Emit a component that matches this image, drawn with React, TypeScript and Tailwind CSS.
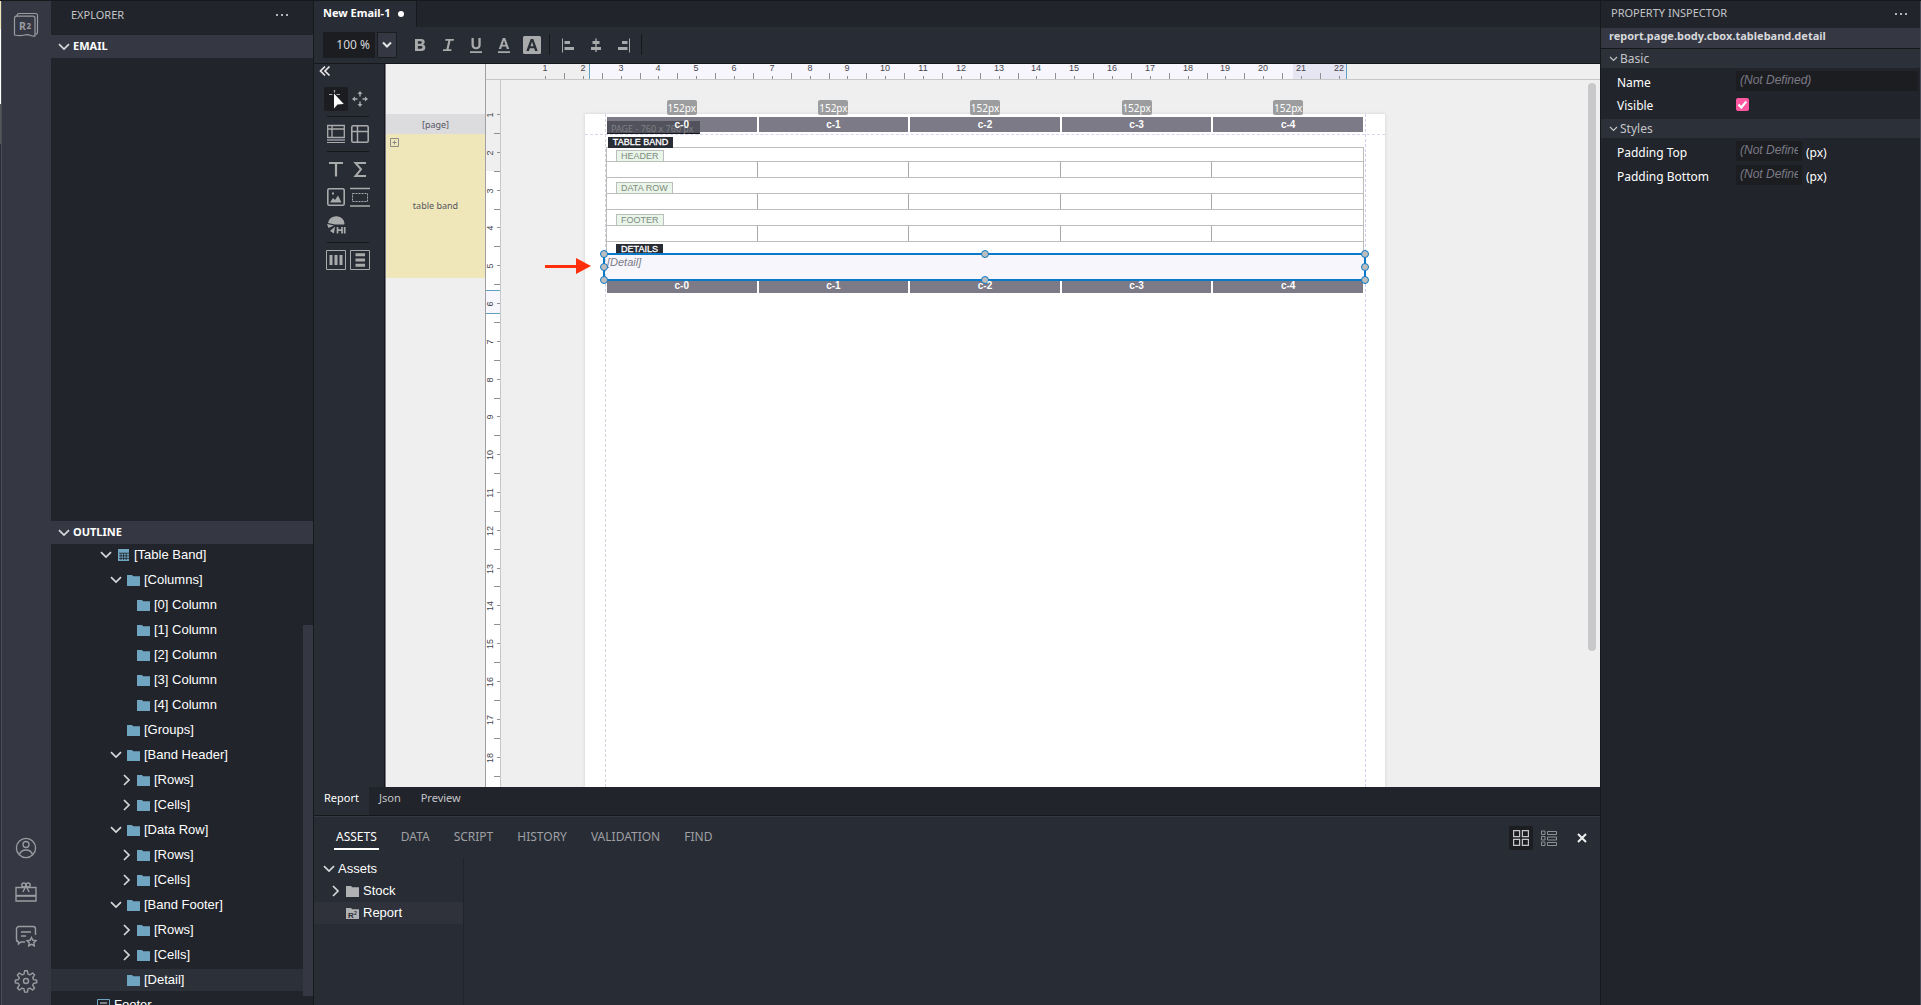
import React from "react";
import clsx from "clsx";

const UNIT = 37.8;

const outlineRows = [
  { level: 1, label: "[Table Band]", icon: "table", state: "open" },
  { level: 2, label: "[Columns]", icon: "folder", state: "open" },
  { level: 3, label: "[0] Column", icon: "folder" },
  { level: 3, label: "[1] Column", icon: "folder" },
  { level: 3, label: "[2] Column", icon: "folder" },
  { level: 3, label: "[3] Column", icon: "folder" },
  { level: 3, label: "[4] Column", icon: "folder" },
  { level: 2, label: "[Groups]", icon: "folder" },
  { level: 2, label: "[Band Header]", icon: "folder", state: "open" },
  { level: 3, label: "[Rows]", icon: "folder", state: "closed" },
  { level: 3, label: "[Cells]", icon: "folder", state: "closed" },
  { level: 2, label: "[Data Row]", icon: "folder", state: "open" },
  { level: 3, label: "[Rows]", icon: "folder", state: "closed" },
  { level: 3, label: "[Cells]", icon: "folder", state: "closed" },
  { level: 2, label: "[Band Footer]", icon: "folder", state: "open" },
  { level: 3, label: "[Rows]", icon: "folder", state: "closed" },
  { level: 3, label: "[Cells]", icon: "folder", state: "closed" },
  { level: 2, label: "[Detail]", icon: "folder", selected: true },
  { level: 0, label: "Footer", icon: "section" },
];

const indents = ["pl-[39px]", "pl-[48px]", "pl-[58px]", "pl-[68px]"];

const columns = ["c-0", "c-1", "c-2", "c-3", "c-4"];
const bands = ["HEADER", "DATA ROW", "FOOTER"];
const panelTabs = ["ASSETS", "DATA", "SCRIPT", "HISTORY", "VALIDATION", "FIND"];

/* ─── ICONS ─── */

function Chevron({ open = true, className = "" }: { open?: boolean; className?: string }) {
  return (
    <svg width="14" height="14" viewBox="0 0 14 14" fill="none" stroke="#d6d7da" strokeWidth="1.7" className={clsx("shrink-0", className)}>
      <path d={open ? "M2 4.2l5 4.900 5-4.900" : "M5 2l5 5-5 5"} />
    </svg>
  );
}

function Folder({ color = "#6fa5c1" }: { color?: string }) {
  return (
    <svg width="13" height="11" viewBox="0 0 13 11" fill={color} className="shrink-0">
      <path d="M0 0h5l1.200 1.200H13V11H0z" />
    </svg>
  );
}

function TreeIcon({ kind }: { kind: string }) {
  if (kind === "table") {
    return (
      <svg width="13" height="12" viewBox="0 0 13 12" className="shrink-0">
        <path fill="#6fa5c1" d="M1 0h11v12H1z" />
        <path stroke="#21242b" strokeWidth=".8" d="M2 4.200h10M2 6.800h10M2 9.400h10M4 4v7M6.600 4v7M9.200 4v7" />
      </svg>
    );
  }
  if (kind === "section") {
    return (
      <svg width="13" height="13" viewBox="0 0 13 13" fill="none" stroke="#6fa5c1" className="shrink-0">
        <path d="M.5.5h12v12H.5z" />
        <path stroke="#d6d7da" d="M3 4h7M4.500 6.500h4M3 9h7" />
      </svg>
    );
  }
  return <Folder />;
}

function Dots() {
  return (
    <svg width="14" height="4" viewBox="0 0 14 4" fill="#b4b5b9">
      <path d="M1 1h2v2H1zM6 1h2v2H6zM11 1h2v2h-2z" />
    </svg>
  );
}

/* ─── ACTIVITY BAR ─── */

function ActivityBar() {
  return (
    <nav className="flex w-[49px] shrink-0 flex-col items-center justify-between bg-[#353843] pt-[11px] pr-[2px] pb-3">
      <button aria-label="Reports">
        <svg width="26" height="26" viewBox="0 0 26 26" fill="none" stroke="#9b9ca1" strokeWidth="1.2">
          <path d="M4 4.5V3.6A2 2 0 0 1 6 1.5h16.5a2 2 0 0 1 2 2V20a2 2 0 0 1-2 2.2" />
          <path d="M3 4.2h17a2 2 0 0 1 2 2V24c-3 1-5.500-2-9-1.200-4 1.200-7 1-11.500.2V6a2 2 0 0 1 1.500-1.800z" />
          <text x="6" y="18" fontSize="10.500" fontWeight="bold" stroke="none" fill="#9b9ca1">R</text>
          <text x="13.500" y="17" fontSize="8" fontWeight="bold" stroke="none" fill="#9b9ca1">2</text>
        </svg>
      </button>
      <div className="flex flex-col items-center gap-[22px]">
        <button aria-label="Account">
          <svg width="22" height="22" viewBox="0 0 22 22" fill="none" stroke="#9b9ca1" strokeWidth="1.3">
            <circle cx="11" cy="11" r="9.600" />
            <circle cx="11" cy="7.500" r="3" />
            <path d="M4.500 17.500c1-3 3-4.500 6.500-4.500s5.500 1.500 6.500 4.500" />
          </svg>
        </button>
        <button aria-label="What is new">
          <svg width="22" height="22" viewBox="0 0 22 22" fill="none" stroke="#9b9ca1" strokeWidth="1.4">
            <path d="M1 6.500h20V20H1z" />
            <path strokeWidth="2" d="M1 14.800h20" />
            <circle cx="8.800" cy="4" r="2" />
            <circle cx="13.200" cy="4" r="2" />
            <path d="M10.500 5.500 8 11M11.500 5.500 14 11" />
          </svg>
        </button>
        <button aria-label="Feedback">
          <svg width="22" height="22" viewBox="0 0 22 22" fill="none" stroke="#9b9ca1" strokeWidth="1.400">
            <path d="M10 17H6l-2.500 2v-2.200A2.500 2.500 0 0 1 1.500 14V4A2.500 2.500 0 0 1 4 1.500h14A2.500 2.500 0 0 1 20.500 4v6M6 7h10M6 11h5" />
            <path d="m16.500 12.500 1.400 2.800 3.100.4-2.200 2.100.5 3.100-2.800-1.500-2.800 1.500.5-3.100-2.200-2.100 3.100-.4z" />
          </svg>
        </button>
        <button aria-label="Settings">
          <svg width="24" height="24" viewBox="0 0 24 24" fill="none" stroke="#9b9ca1" strokeWidth="1.400" strokeLinejoin="round">
            <circle cx="12" cy="12" r="2.500" />
            <path d="m10.600 1.800-.6 3.300-1.900.8-2.700-1.900-2 2 1.900 2.700-.8 1.900-3.200.6v2.600l3.200.6.8 1.900L3.400 19l2 2 2.700-1.900 1.900.8.6 3.200h2.800l.6-3.200 1.900-.8 2.700 1.900 2-2-1.900-2.700.8-1.900 3.200-.6v-2.600l-3.200-.6-.8-1.900L20.600 6l-2-2-2.700 1.900-1.900-.8-.6-3.300z" />
          </svg>
        </button>
      </div>
    </nav>
  );
}

/* ─── EXPLORER ─── */

function SectionHeader({ title }: { title: string }) {
  return (
    <h2 className="bg-[#353843]">
      <button className="flex h-[23px] w-full items-center gap-[2px] pl-[6px] text-[11px] font-bold text-white">
        <Chevron />
        {title}
      </button>
    </h2>
  );
}

function Explorer() {
  return (
    <aside className="flex w-[262px] shrink-0 flex-col bg-[#21242b]">
      <header className="flex h-[34px] items-center justify-between pb-[6px] pl-5 pr-6 text-[11px] text-[#c4c5c8]">
        <span>EXPLORER</span>
        <button aria-label="Explorer actions"><Dots /></button>
      </header>
      <SectionHeader title="EMAIL" />
      <div className="flex-1" />
      <SectionHeader title="OUTLINE" />
      <div className="flex h-[461px] overflow-hidden">
        <ul className="flex min-w-0 flex-1 flex-col gap-[3px] font-['Liberation_Sans',Arial,sans-serif] text-[13px] text-white">
          {outlineRows.map((row, i) => (
            <li
              key={i}
              className={clsx("flex h-[22px] shrink-0 items-center gap-1", indents[row.level], row.selected && "bg-[#2c3038]")}
            >
              {row.state ? (
                <Chevron open={row.state === "open"} />
              ) : (
                <span className={row.level === 0 ? "w-[3px]" : "w-[14px]"} />
              )}
              <TreeIcon kind={row.icon} />
              <span>{row.label}</span>
            </li>
          ))}
        </ul>
        <div className="mt-[81px] mb-[9px] w-[10px] bg-[#353843]" />
      </div>
    </aside>
  );
}

/* ─── TOOLBAR ─── */

function FormatButton({ label, children }: { label: string; children: React.ReactNode }) {
  return (
    <button aria-label={label} className="flex h-7 w-7 items-center justify-center">
      <svg width="20" height="20" viewBox="0 0 20 20" fill="#a9aaab">
        {children}
      </svg>
    </button>
  );
}

function Toolbar() {
  return (
    <div className="flex h-9 shrink-0 items-center bg-[#282c34] pb-px pl-[9px]">
      <input
        aria-label="Zoom"
        defaultValue="100 %"
        className="h-[26px] w-[52px] bg-[#1c1d21] pr-[5px] text-right text-[12px] text-[#d6d7da]"
      />
      <button aria-label="Zoom levels" className="ml-[2px] flex h-[26px] w-5 items-center justify-center border border-[#1c1d21] bg-[#353843]">
        <svg width="10" height="8" viewBox="0 0 10 8" fill="none" stroke="#e6e6e8" strokeWidth="2">
          <path d="m1 1.500 4 4 4-4" />
        </svg>
      </button>
      <div className="ml-[9px] flex">
        <FormatButton label="Bold">
          <path fillRule="evenodd" d="M5 4h6.200c2.200 0 3.500 1.100 3.500 3 0 1.200-.6 2-1.600 2.500 1.400.4 2.200 1.400 2.200 2.900 0 2.200-1.500 3.600-4 3.600H5zm2.900 2.300v2.500h2.600c.9 0 1.400-.4 1.400-1.200s-.5-1.300-1.400-1.300zm0 4.600v2.800h3c1 0 1.500-.5 1.500-1.400s-.5-1.400-1.500-1.400z" />
        </FormatButton>
        <FormatButton label="Italic">
          <path d="M7.500 4H16l-.3 1.800h-3.200l-1.900 8.400h3l-.4 1.800H4.800l.4-1.800h3.200l1.900-8.400H7.200z" />
        </FormatButton>
        <FormatButton label="Underline">
          <path d="M5.500 3h2.300v6.500c0 1.800.8 2.700 2.300 2.700s2.300-.9 2.300-2.700V3h2.300v6.700c0 2.900-1.700 4.500-4.600 4.500s-4.600-1.600-4.600-4.500zM4 16.200h12V18H4z" />
        </FormatButton>
        <FormatButton label="Text colour">
          <path fillRule="evenodd" d="M8.800 3h2.400l4 11h-2.400l-.8-2.400H8L7.200 14H4.800zM10 5.500 8.600 9.800h2.800zM4 16.200h12V18H4z" />
        </FormatButton>
        <FormatButton label="Fill colour">
          <path fillRule="evenodd" d="M2.500 1h15A1.500 1.500 0 0 1 19 2.500v15a1.500 1.500 0 0 1-1.500 1.500h-15A1.500 1.500 0 0 1 1 17.500v-15A1.500 1.500 0 0 1 2.500 1zm6.200 3L4.300 16h2.600l.9-2.700h4.400l.9 2.700h2.600L11.300 4zM10 6.700l1.500 4.500h-3z" />
        </FormatButton>
      </div>
      <div className="ml-[3px] h-[21px] w-px bg-[#17181b]" />
      <div className="ml-1 flex">
        <FormatButton label="Align left">
          <path d="M4 3.500h1v14H4zM6.500 6H12v3H6.500zM6.500 12H16v3H6.500z" />
        </FormatButton>
        <FormatButton label="Align centre">
          <path d="M9.300 3.500h1.400V17H9.300zM6.500 6h7v3h-7zM5 12h10v3H5z" />
        </FormatButton>
        <FormatButton label="Align right">
          <path d="M15 3.500h1v14h-1zM8 6h5.500v3H8zM4 12h9.500v3H4z" />
        </FormatButton>
      </div>
      <div className="ml-[3px] h-[21px] w-px bg-[#17181b]" />
    </div>
  );
}

/* ─── TOOLBOX ─── */

function Tool({ label, active, children }: { label: string; active?: boolean; children: React.ReactNode }) {
  return (
    <button aria-label={label} className={clsx("flex h-6 w-6 items-center justify-center rounded-[2px]", active && "bg-[#1c1d21]")}>
      <svg width="20" height="20" viewBox="0 0 20 20" fill="none" stroke="#a9aaab">
        {children}
      </svg>
    </button>
  );
}

function ToolDivider() {
  return <div className="mx-[3px] my-[5px] h-px bg-[#17181b]" />;
}

function Toolbox() {
  return (
    <div className="w-[71px] shrink-0 border-r border-[#17181b] bg-[#282c34] pl-[10px]">
      <button aria-label="Collapse toolbox" className="-ml-[5px] flex h-[13px] items-end">
        <svg width="12" height="12" viewBox="0 0 12 12" fill="none" stroke="#e6e6e8" strokeWidth="1.700">
          <path d="M6 1.500 1.500 6 6 10.500M10.500 1.500 6 6l4.500 4.500" />
        </svg>
      </button>
      <div className="mt-[10px] flex w-12">
        <Tool label="Select" active>
          <path fill="#fff" stroke="none" d="M8 4.500v15l3.500-4 6.300-.5z" />
          <path d="M8.500 1v2.500M3 5.500h3.500M10.500 5.500H14" strokeWidth="1.200" />
        </Tool>
        <Tool label="Move">
          <path fill="#a9aaab" stroke="none" d="m10 2 2.500 3h-1.800v2.500H9.300V5H7.500zM10 18l-2.500-3h1.800v-2.500h1.400V15h1.800zM2 10l3-2.500v1.800h2.500v1.400H5v1.800zM18 10l-3 2.500v-1.800h-2.500V9.300H15V7.500z" />
        </Tool>
      </div>
      <div className="w-12"><ToolDivider /></div>
      <div className="flex w-12">
        <Tool label="Table band">
          <path strokeWidth="1.300" d="M1.700 1.500h16.600v12H1.700zM1.700 5h16.600M6 1.500v12" />
          <path stroke="#7b7a86" strokeWidth="2" d="M1 16h18" />
          <path d="M1 18.500h18" />
        </Tool>
        <Tool label="Table">
          <rect x="1.800" y="1.800" width="16.400" height="16.400" rx="1.500" strokeWidth="1.600" />
          <path strokeWidth="1.500" d="M2 7.500h16M7.500 2v16" />
        </Tool>
      </div>
      <div className="w-12"><ToolDivider /></div>
      <div className="flex w-12 flex-wrap gap-y-1">
        <Tool label="Text">
          <path strokeWidth="2.200" d="M3 4h14M10 4v13.500" />
        </Tool>
        <Tool label="Expression">
          <path strokeWidth="2" d="M16 4H5.500l5.500 6.300L5.500 17H16" />
        </Tool>
        <Tool label="Image">
          <rect x="1.800" y="1.800" width="16.400" height="16.400" rx="1.500" strokeWidth="1.600" />
          <path fill="#a9aaab" stroke="none" d="M4 15.500 7 11l2 2 3-4.500 3.500 7zM6 5.500h2v2H6z" />
        </Tool>
        <Tool label="Section">
          <path d="M0 1.500h20M0 19h20" strokeWidth="1.300" />
          <path strokeDasharray="2 1" d="M2.500 6.500h15v8h-15z" />
        </Tool>
        <Tool label="Chart">
          <path fill="#a9aaab" stroke="none" d="M2 8a8 7 0 0 1 16.500 1L18 9.500H9zM1 9l7 1.500L2.500 13zM4 16l5-4.500-1 7z" />
          <path strokeWidth="1.700" d="M11.500 12v6.500M16 12v6.500M11.500 15.200H16M18.700 12v6.500" />
        </Tool>
      </div>
      <div className="w-12"><ToolDivider /></div>
      <div className="flex w-12">
        <Tool label="Columns">
          <path d="M.5.5h19v19H.5z" />
          <path strokeWidth="3" d="M5 5v10M10 5v10M15 5v10" />
        </Tool>
        <Tool label="Rows">
          <path d="M.5.5h19v19H.5z" />
          <path strokeWidth="3" d="M5.500 4.800h9.500M5.500 10h9.500M5.500 15.200h9.500" />
        </Tool>
      </div>
    </div>
  );
}

/* ─── RULERS ─── */

function HorizontalRuler() {
  const marks = Array.from({ length: 22 }, (_, i) => i + 1);
  return (
    <div className="relative flex h-4 shrink-0 overflow-hidden border-b border-[#c8c8c8] bg-[#efefef] font-['Liberation_Sans',Arial,sans-serif] text-[9px] leading-[9px] text-[#45454c]">
      <div className="w-[104px] border-r border-[#5fa3c0]" />
      <div className="w-[703px] bg-[#f6f6fc]" />
      <div className="w-[54px] border-r border-[#5fa3c0] bg-[#e6e6f2]" />
      {marks.map((n) => (
        <React.Fragment key={n}>
          <span className="absolute top-0 w-5 -translate-x-1/2 text-center" style={{ left: Math.round(59 + UNIT * (n - 1)) }}>{n}</span>
          <i className="absolute bottom-0 h-[3px] w-px bg-[#8f8f94]" style={{ left: Math.round(59 + UNIT * (n - 1)) }} />
          {n < 22 && <i className="absolute bottom-0 h-[6px] w-px bg-[#8f8f94]" style={{ left: Math.round(59 + UNIT * (n - 0.5)) }} />}
        </React.Fragment>
      ))}
    </div>
  );
}

function VerticalRuler() {
  const marks = Array.from({ length: 18 }, (_, i) => i + 1);
  return (
    <div className="relative flex w-[15px] shrink-0 flex-col overflow-hidden border-r border-[#c8c8c8] bg-white font-['Liberation_Sans',Arial,sans-serif] text-[9px] leading-[9px] text-[#45454c]">
      <div className="h-[91px] shrink-0 bg-[#efefef]" />
      <div className="h-[120px] shrink-0 border-b border-[#5fa3c0]" />
      <div className="h-[23px] shrink-0 border-b border-[#5fa3c0] bg-[#f6f6fc]" />
      {marks.map((n) => (
        <React.Fragment key={n}>
          <span className="absolute -left-[6px] w-5 -translate-y-1/2 -rotate-90 text-center" style={{ top: Math.round(35 + UNIT * (n - 1)) }}>{n}</span>
          <i className="absolute right-0 h-px w-[3px] bg-[#8f8f94]" style={{ top: Math.round(34 + UNIT * (n - 1)) }} />
          <i className="absolute right-0 h-px w-[6px] bg-[#8f8f94]" style={{ top: Math.round(34 + UNIT * (n - 0.5)) }} />
        </React.Fragment>
      ))}
    </div>
  );
}

/* ─── DESIGN SURFACE ─── */

function ColumnBar({ badges }: { badges?: boolean }) {
  return (
    <div className="grid grid-cols-5 gap-[2px] px-px text-center text-[10px] leading-[15px]">
      {columns.map((c) => (
        <div key={c} className="relative h-[15px] bg-[#7b7a86] font-['Liberation_Sans',Arial,sans-serif] font-bold text-white">
          {badges && (
            <span className="absolute -top-[17px] left-1/2 h-[15px] w-[30px] -translate-x-1/2 rounded-[2px] bg-[#9c9d9e] font-['Noto_Sans','Open_Sans',sans-serif] leading-[17px] font-normal">
              152px
            </span>
          )}
          <span className="relative z-10">{c}</span>
        </div>
      ))}
    </div>
  );
}

function Handle({ className }: { className: string }) {
  return <i className={clsx("absolute h-2 w-2 rounded-full border border-[#0a7ac8] bg-[#bdbdbd]", className)} />;
}

function ReportPage() {
  return (
    <div className="relative mt-[34px] ml-[84px] w-[800px] shrink-0 self-stretch bg-white px-[21px] pt-[3px] shadow-[0_0_3px_#cfcfd4]">
      {/* margin guides */}
      <div className="absolute inset-x-0 top-5 border-t border-dashed border-[#d6d6f5]" />
      <div className="absolute inset-y-0 left-5 border-l border-dashed border-[#d3d3de]" />
      <div className="absolute inset-y-0 right-[19px] border-l border-dashed border-[#d0d0f0]" />

      <ColumnBar badges />
      <div className="absolute left-[22px] top-[7px] h-[13px] w-[93px] border-b border-[#17181b] bg-[#51525b] pl-1 text-[9px] leading-[15px] text-[#7f8087]">
        PAGE - 760 x 760 px
      </div>

      <div className="font-['Liberation_Sans',Arial,sans-serif] text-[9px] leading-[11px]">
        <div className="relative z-10 mt-[5px] ml-[2px] h-[11px] w-[65px] bg-[#282c34] text-center text-white [-webkit-text-stroke:0.3px_white]">
          TABLE BAND
        </div>
        <div className="-mt-px border border-b-0 border-[#bdbdbd]">
          {bands.map((band, i) => (
            <div key={band}>
              <div className={clsx("flex items-end border-b border-[#bdbdbd] pl-[9px]", i === 0 ? "h-[14px]" : "h-4")}>
                <span className="h-[11px] border border-b-0 border-[#bdbdbd] bg-[#e9f5e9] px-1 leading-[10px] text-[#7f8a80]">
                  {band}
                </span>
              </div>
              <div className="grid h-4 grid-cols-5 divide-x divide-[#a9a9ab] border-b border-[#bdbdbd]">
                {columns.map((c) => (
                  <div key={c} />
                ))}
              </div>
            </div>
          ))}
          <div className="flex h-[13px] items-end pl-[9px]">
            <span className="h-[11px] w-[47px] bg-[#282c34] text-center text-white [-webkit-text-stroke:0.3px_white]">DETAILS</span>
          </div>
        </div>
        <div className="relative z-10 h-6 bg-[#f6f6fc] pl-px text-[11px] leading-[14px] text-[#7b7a86] italic">
          [Detail]
          <div className="absolute -top-[2px] -right-[2px] -bottom-[2px] -left-[3px] border-2 border-[#0a7ac8]">
            <Handle className="-top-[5px] -left-[5px]" />
            <Handle className="-top-[5px] left-1/2 -translate-x-1/2" />
            <Handle className="-top-[5px] -right-[5px]" />
            <Handle className="top-1/2 -left-[5px] -translate-y-1/2" />
            <Handle className="top-1/2 -right-[5px] -translate-y-1/2" />
            <Handle className="-bottom-[5px] -left-[5px]" />
            <Handle className="-bottom-[5px] left-1/2 -translate-x-1/2" />
            <Handle className="-right-[5px] -bottom-[5px]" />
          </div>
        </div>
      </div>
      <div className="-mt-px">
        <ColumnBar />
      </div>

      {/* pointer to the detail band */}
      <svg width="46" height="16" viewBox="0 0 46 16" fill="#ff2f0e" className="absolute -left-10 top-[144px]">
        <path d="M0 7h31V0l15 8-15 8v-6H0z" />
      </svg>
    </div>
  );
}

function Canvas() {
  return (
    <div className="flex min-h-0 min-w-0 flex-1 border-l border-[#7b7a86] bg-[#efefef]">
      <div className="w-[100px] shrink-0 border-r border-[#a0a0a4] pt-[50px] text-center text-[9px] text-[#55565f]">
        <div className="h-5 bg-[#dcdcdf] leading-[21px]">[page]</div>
        <div className="relative flex h-[144px] items-center justify-center bg-[#efe6ba]">
          <button aria-label="Add section" className="absolute top-1 left-1">
            <svg width="9" height="9" viewBox="0 0 9 9" fill="none" stroke="#8c8a86">
              <path d="M.5.500h8v8h-8zM4.500 2.500v4M2.500 4.500h4" />
            </svg>
          </button>
          table band
        </div>
      </div>
      <div className="flex min-w-0 flex-1 flex-col">
        <HorizontalRuler />
        <div className="flex min-h-0 flex-1">
          <VerticalRuler />
          <div className="relative flex min-w-0 flex-1 overflow-hidden">
            <ReportPage />
            <div className="absolute top-[3px] right-1 h-[568px] w-2 rounded-full bg-[#c8c8ca]" />
          </div>
        </div>
      </div>
    </div>
  );
}

/* ─── BOTTOM PANEL ─── */

function BottomPanel() {
  return (
    <section className="flex h-[189px] shrink-0 flex-col border-t border-[#353843] bg-[#282c34]">
      <div className="flex h-[41px] shrink-0 items-start justify-between pl-5">
        <div className="flex gap-5 pt-2 text-[12px] text-[#9fa0a5]">
          {panelTabs.map((tab, i) => (
            <button key={tab} className={clsx("h-[25px] border-b-2 px-[2px]", i === 0 ? "border-white text-white" : "border-transparent")}>
              {tab}
            </button>
          ))}
        </div>
        <div className="flex items-center pt-[9px]">
          <button aria-label="Grid view" className="flex h-6 w-6 items-center justify-center rounded-[2px] bg-[#1c1d21]">
            <svg width="16" height="16" viewBox="0 0 16 16" fill="none" stroke="#c4c5c8" strokeWidth="1.200">
              <path d="M.6.600h6v6h-6zM9.400.600h6v6h-6zM.6 9.400h6v6h-6zM9.400 9.400h6v6h-6z" />
            </svg>
          </button>
          <button aria-label="List view" className="ml-2">
            <svg width="16" height="16" viewBox="0 0 16 16" fill="none" stroke="#8f9095">
              <path d="M.5 1h3.500v3.500H.5zM.5 6.500H4V10H.5zM.5 12H4v3.500H.5zM6.500 1.500h9v3h-9zM6.500 7h9v3h-9zM6.500 12.500h9v3h-9z" />
            </svg>
          </button>
          <button aria-label="Close panel" className="mr-[13px] ml-5">
            <svg width="10" height="10" viewBox="0 0 10 10" stroke="#f0f0f1" strokeWidth="2">
              <path d="m1 1 8 8M9 1 1 9" />
            </svg>
          </button>
        </div>
      </div>
      <ul className="w-[150px] flex-1 border-r border-[#21242b] font-['Liberation_Sans',Arial,sans-serif] text-[13px] text-white">
        <li className="flex h-[22px] items-center gap-[2px] pl-2">
          <Chevron />
          Assets
        </li>
        <li className="flex h-[22px] items-center gap-1 pl-[14px]">
          <Chevron open={false} />
          <Folder color="#b0b1b2" />
          Stock
        </li>
        <li className="flex h-[22px] items-center gap-1 bg-[#2f323b] pl-8">
          <svg width="13" height="11" viewBox="0 0 13 11" className="shrink-0">
            <path fill="#b0b1b2" d="M0 0h5l1.200 1.200H13V11H0z" />
            <text x="2" y="9.500" fontSize="8" fontWeight="bold" fill="#282c34">R</text>
            <text x="8" y="7" fontSize="5" fontWeight="bold" fill="#282c34">2</text>
          </svg>
          Report
        </li>
      </ul>
    </section>
  );
}

function Editor() {
  return (
    <main className="flex min-w-0 flex-1 flex-col border-l border-[#17181b] bg-[#21242b]">
      <div className="flex h-[26px] shrink-0">
        <button className="flex w-[103px] items-center gap-2 border-r border-[#17181b] bg-[#282c34] pb-[2px] pl-[9px] text-[11px] font-bold text-white">
          New Email-1
          <i className="mt-[2px] h-[6px] w-[6px] rounded-full bg-white" />
        </button>
      </div>
      <Toolbar />
      <div className="flex min-h-0 flex-1 border-t border-[#17181b]">
        <Toolbox />
        <Canvas />
      </div>
      <div className="flex h-7 shrink-0 text-[11px] text-[#c4c5c8]">
        <button className="bg-[#282c34] px-[10px] pb-[5px] text-white">Report</button>
        <button className="px-[10px] pb-[5px]">Json</button>
        <button className="px-[10px] pb-[5px]">Preview</button>
      </div>
      <div className="h-px shrink-0 bg-[#17181b]" />
      <BottomPanel />
    </main>
  );
}

/* ─── PROPERTY INSPECTOR ─── */

function GroupHeader({ title }: { title: string }) {
  return (
    <h3 className="bg-[#2c3038] text-[12px] text-[#c4c5c8]">
      <button className="flex h-[19px] w-full items-center gap-[2px] pt-px pl-2">
        <svg width="9" height="8" viewBox="0 0 9 8" fill="none" stroke="#c4c5c8" strokeWidth="1.200">
          <path d="M1 2l3.500 3.500L8 2" />
        </svg>
        {title}
      </button>
    </h3>
  );
}

const fieldClass =
  "h-5 bg-[#1c1d21] px-1 pb-[2px] font-['Liberation_Sans',Arial,sans-serif] text-[12px] italic placeholder:text-[#7b7a86]";

function PropertyInspector() {
  return (
    <aside className="flex w-[321px] shrink-0 flex-col border-r border-l border-l-[#17181b] border-r-[#4a4d57] bg-[#21242b] text-[12px] text-white">
      <header className="flex h-[27px] items-center justify-between pb-[2px] pl-[10px] pr-3 text-[11px] text-[#c4c5c8]">
        <span>PROPERTY INSPECTOR</span>
        <button aria-label="Inspector actions"><Dots /></button>
      </header>
      <div className="h-[20px] bg-[#353843] pl-2 text-[11px] leading-[16px] font-bold text-[#d6d7da]">
        report.page.body.cbox.tableband.detail
      </div>
      <div className="h-px bg-[#17181b]" />
      <GroupHeader title="Basic" />
      <div className="pt-[3px]">
        <div className="flex h-6 items-start pl-4 pr-[2px]">
          <label htmlFor="name" className="w-[119px] leading-[24px]">Name</label>
          <input id="name" placeholder="(Not Defined)" className={clsx(fieldClass, "min-w-0 flex-1")} />
        </div>
        <div className="flex h-6 items-start pl-4">
          <label htmlFor="visible" className="w-[119px] leading-[22px]">Visible</label>
          <span className="relative mt-[3px] h-[13px] w-[13px]">
            <input id="visible" type="checkbox" defaultChecked className="block h-[13px] w-[13px] appearance-none rounded-[2px] bg-[#ff57a0]" />
            <svg width="13" height="13" viewBox="0 0 13 13" fill="none" stroke="#fff" strokeWidth="2.200" className="pointer-events-none absolute inset-0">
              <path d="m2.500 6.500 2.800 3 5-6" />
            </svg>
          </span>
        </div>
      </div>
      <GroupHeader title="Styles" />
      <div className="pt-[3px]">
        {["Padding Top", "Padding Bottom"].map((name) => (
          <div key={name} className="flex h-6 items-start pl-4">
            <label htmlFor={name} className="w-[119px] leading-[24px]">{name}</label>
            <input id={name} placeholder="(Not Defined)" className={clsx(fieldClass, "w-[66px]")} />
            <span className="ml-1 leading-[24px]">(px)</span>
          </div>
        ))}
      </div>
    </aside>
  );
}

export default function App() {
  return (
    <div className="flex h-screen overflow-hidden border-t border-[#17181b] bg-[#21242b] font-['Noto_Sans','Open_Sans',sans-serif]">
      <div className="flex w-[2px] shrink-0 flex-col border-r border-[#4a4d57] bg-[#2c2e36]">
        <div className="h-[28px] bg-[#efe6ba]" />
        <div className="h-[75px] bg-white" />
        <div className="h-[40px] bg-[#55565a]" />
      </div>
      <ActivityBar />
      <Explorer />
      <Editor />
      <PropertyInspector />
    </div>
  );
}
